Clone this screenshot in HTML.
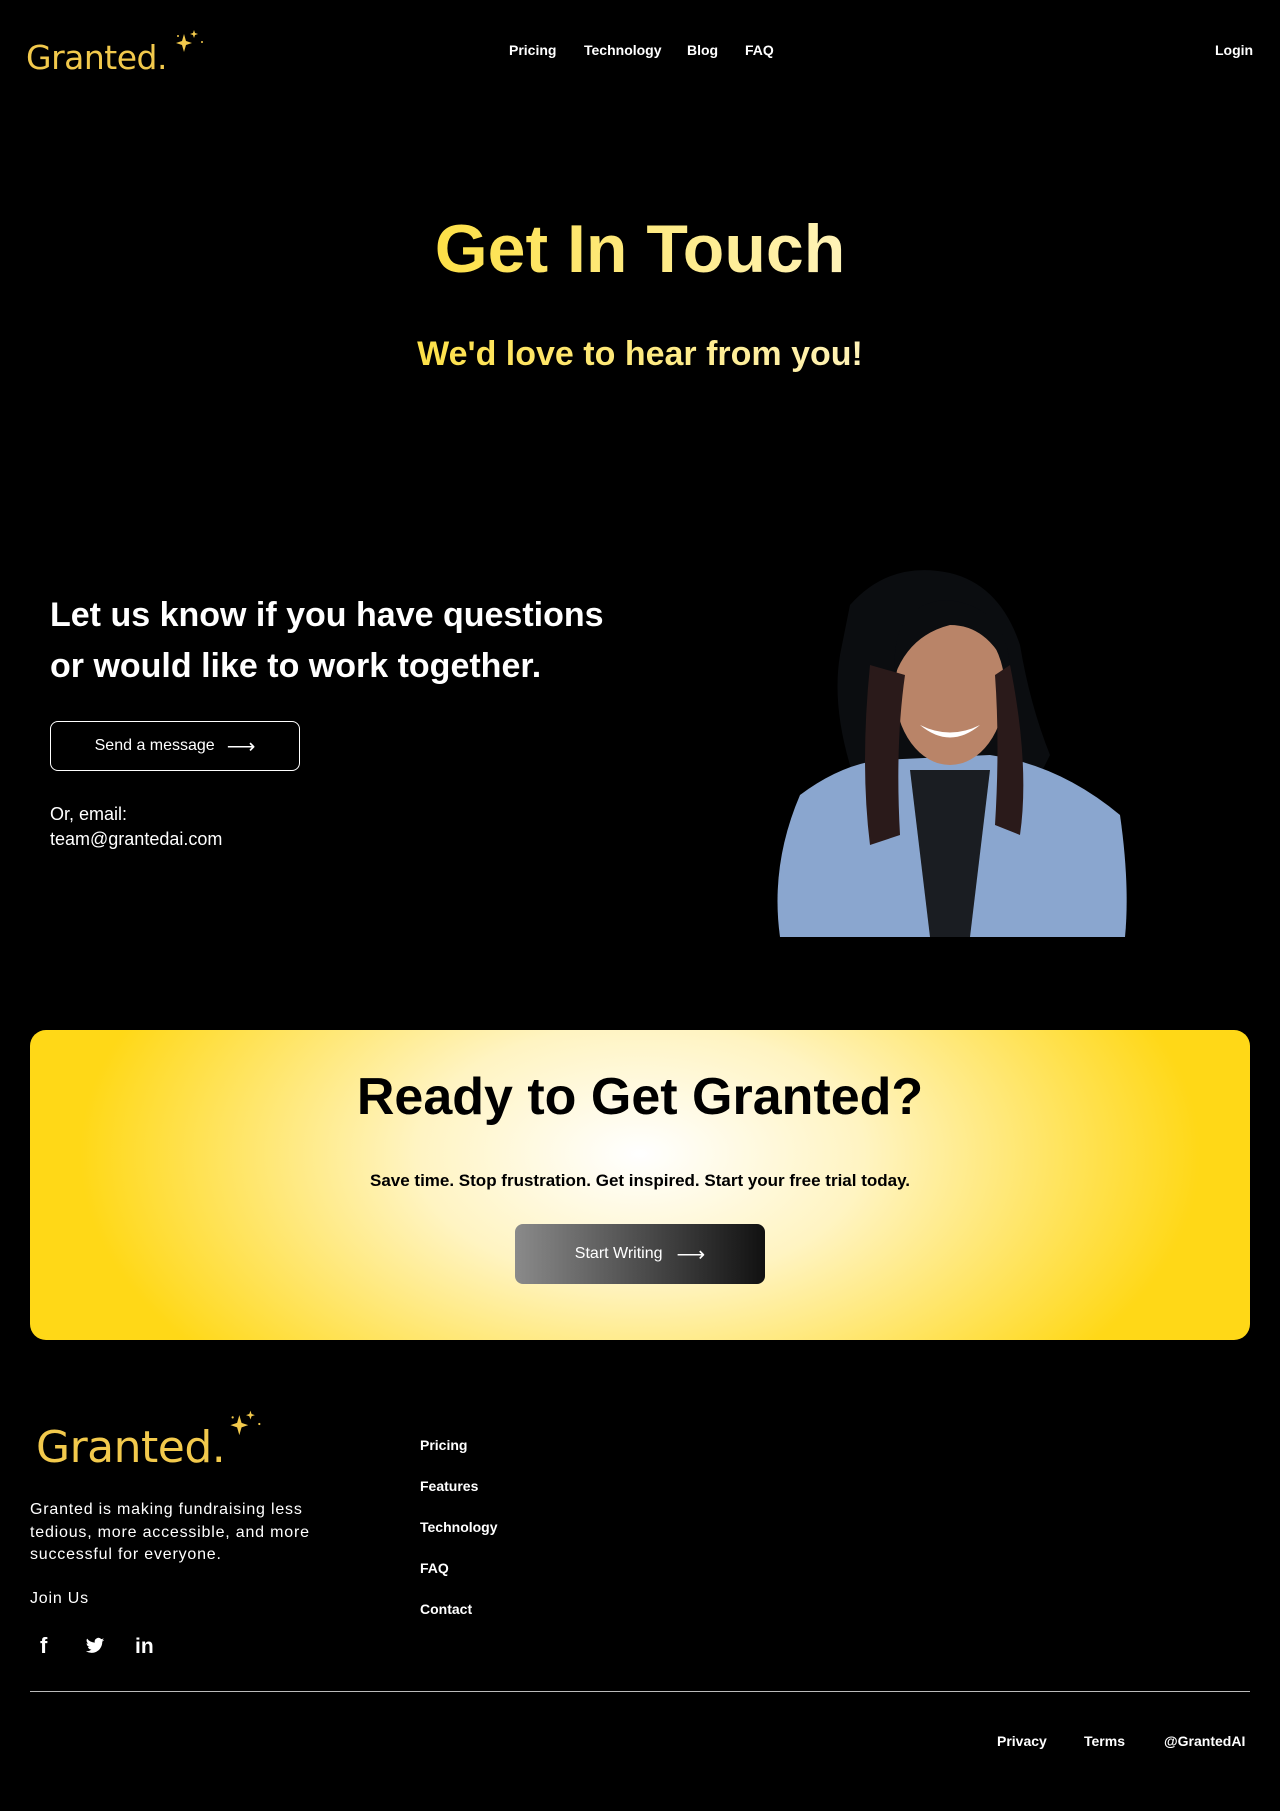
<!DOCTYPE html>
<html><head><meta charset="utf-8"><style>
*{margin:0;padding:0;box-sizing:border-box}
body{width:1280px;height:1811px;background:#000;color:#fff;font-family:"Liberation Sans",Arial,sans-serif;position:relative;overflow:hidden}
.a{position:absolute}
.nav{font-size:14px;font-weight:bold;top:42px}
.logo{font-family:"DejaVu Sans","Liberation Sans",sans-serif;color:#f2c94c;font-weight:normal}
.fl{font-size:14px;font-weight:bold;left:420px}
.g{background:linear-gradient(90deg,#fde047,#fff3b8);-webkit-background-clip:text;color:transparent}
</style></head><body>
<div class="a logo" style="left:26px;top:38px;font-size:33px;letter-spacing:-0.5px">Granted.</div>
<svg class="a" style="left:172px;top:28px" width="36" height="28" viewBox="0 0 36 28"><path d="M12 6 L14 13 L20 15 L14 17 L12 24 L10 17 L4 15 L10 13Z" fill="#f2c94c"/><path d="M22 2 L23 5 L26 6 L23 7 L22 10 L21 7 L18 6 L21 5Z" fill="#f2c94c"/><circle cx="6" cy="8" r="1" fill="#f2c94c"/><circle cx="30" cy="14" r="1" fill="#f2c94c"/></svg>
<div class="a nav" style="left:509px">Pricing</div>
<div class="a nav" style="left:584px">Technology</div>
<div class="a nav" style="left:687px">Blog</div>
<div class="a nav" style="left:745px">FAQ</div>
<div class="a nav" style="left:1215px">Login</div>

<div class="a" style="left:0;width:1280px;top:210px;text-align:center;font-size:68px;font-weight:bold"><span class="g">Get In Touch</span></div>
<div class="a" style="left:0;width:1280px;top:335px;text-align:center;font-size:34px;font-weight:bold"><span class="g">We'd love to hear from you!</span></div>

<div class="a" style="left:50px;top:590px;font-size:34px;font-weight:bold;line-height:51px">Let us know if you have questions<br>or would like to work together.</div>
<div class="a" style="left:50px;top:721px;width:250px;height:50px;border:1px solid #fff;border-radius:8px;font-size:16px;display:flex;align-items:center;justify-content:center;gap:12px">Send a message <span style="font-size:20px">⟶</span></div>
<div class="a" style="left:50px;top:802px;font-size:18px;line-height:25px">Or, email:<br>team@grantedai.com</div>

<svg class="a" style="left:770px;top:565px" width="360" height="372" viewBox="0 0 360 372">
<path d="M80 40 Q120 -5 180 8 Q230 20 250 80 Q260 140 280 190 L260 230 Q200 250 140 240 L90 230 Q60 150 70 90Z" fill="#0b0d10"/>
<path d="M10 372 Q0 300 30 230 Q70 200 110 195 L220 190 Q290 200 350 250 Q360 320 355 372Z" fill="#8aa6cf"/>
<path d="M140 205 L220 205 L200 372 L160 372Z" fill="#1a1d22"/>
<ellipse cx="180" cy="125" rx="55" ry="75" fill="#b98468"/>
<path d="M125 110 Q120 40 175 35 Q240 40 240 110 Q220 60 180 60 Q140 70 125 110Z" fill="#0b0d10"/>
<path d="M150 160 Q180 185 210 160 Q180 175 150 160Z" fill="#fff"/>
<path d="M100 100 Q90 200 100 280 L130 270 Q125 180 135 110Z" fill="#2a1a1a"/>
<path d="M240 100 Q260 200 250 270 L225 260 Q230 180 225 110Z" fill="#2a1a1a"/>
</svg>

<div class="a" style="left:30px;top:1030px;width:1220px;height:310px;border-radius:16px;background:radial-gradient(ellipse 560px 320px at 50% 40%,#fff 0%,#fff4c2 40%,#ffd817 100%)"></div>
<div class="a" style="left:0;width:1280px;top:1067px;text-align:center;font-size:52px;font-weight:bold;color:#000">Ready to Get Granted?</div>
<div class="a" style="left:0;width:1280px;top:1171px;text-align:center;font-size:17px;font-weight:bold;color:#000">Save time. Stop frustration. Get inspired. Start your free trial today.</div>
<div class="a" style="left:515px;top:1224px;width:250px;height:60px;border-radius:8px;background:linear-gradient(90deg,#8a8a8a,#111);font-size:16px;display:flex;align-items:center;justify-content:center;gap:14px">Start Writing <span style="font-size:20px">⟶</span></div>

<div class="a logo" style="left:36px;top:1422px;font-size:44px;letter-spacing:-0.5px">Granted.</div>
<svg class="a" style="left:226px;top:1408px" width="40" height="32" viewBox="0 0 36 28"><path d="M12 6 L14 13 L20 15 L14 17 L12 24 L10 17 L4 15 L10 13Z" fill="#f2c94c"/><path d="M22 2 L23 5 L26 6 L23 7 L22 10 L21 7 L18 6 L21 5Z" fill="#f2c94c"/><circle cx="6" cy="8" r="1" fill="#f2c94c"/><circle cx="30" cy="14" r="1" fill="#f2c94c"/></svg>
<div class="a" style="left:30px;top:1499px;font-size:16px;line-height:22.5px;letter-spacing:0.8px;width:320px">Granted is making fundraising less tedious, more accessible, and more successful for everyone.</div>
<div class="a" style="left:30px;top:1590px;font-size:16px;letter-spacing:0.8px">Join Us</div>
<div class="a" style="left:40px;top:1633px;font-size:22px;font-weight:bold">f</div>
<svg class="a" style="left:85px;top:1637px" width="20" height="18" viewBox="0 0 24 20"><path d="M23 2.5a9 9 0 0 1-2.6.7A4.5 4.5 0 0 0 22.4.7a9 9 0 0 1-2.9 1.1A4.5 4.5 0 0 0 11.8 6 12.8 12.8 0 0 1 2.5 1.2a4.5 4.5 0 0 0 1.4 6 4.5 4.5 0 0 1-2-.6 4.5 4.5 0 0 0 3.6 4.5 4.5 4.5 0 0 1-2 .1 4.5 4.5 0 0 0 4.2 3.1A9 9 0 0 1 1 16.2 12.8 12.8 0 0 0 7.9 18.2c8.3 0 12.8-6.9 12.8-12.8v-.6A9 9 0 0 0 23 2.5z" fill="#fff"/></svg>
<div class="a" style="left:135px;top:1635px;font-size:21px;font-weight:bold">in</div>
<div class="a fl" style="top:1437px">Pricing</div>
<div class="a fl" style="top:1478px">Features</div>
<div class="a fl" style="top:1519px">Technology</div>
<div class="a fl" style="top:1560px">FAQ</div>
<div class="a fl" style="top:1601px">Contact</div>
<div class="a" style="left:30px;top:1691px;width:1220px;height:1px;background:#bbb"></div>
<div class="a fl" style="left:997px;top:1733px">Privacy</div>
<div class="a fl" style="left:1084px;top:1733px">Terms</div>
<div class="a fl" style="left:1164px;top:1733px">@GrantedAI</div>
</body></html>
